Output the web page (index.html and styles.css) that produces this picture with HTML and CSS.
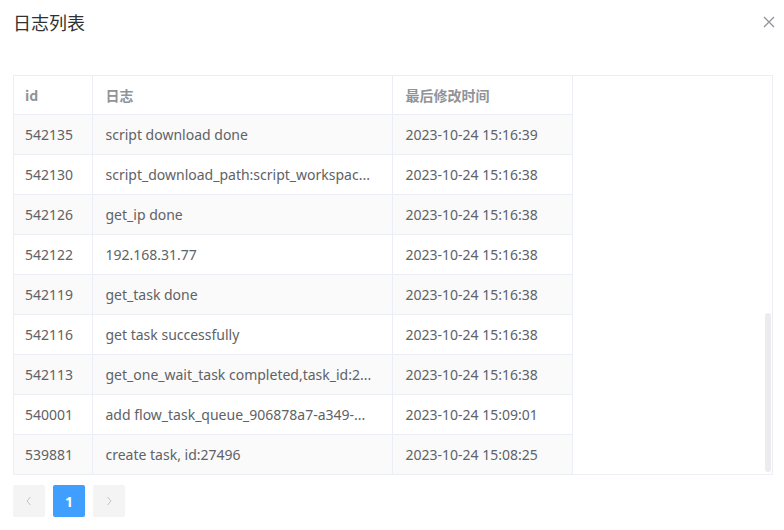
FILE: index.html
```html
<!DOCTYPE html>
<html lang="zh">
<head>
<meta charset="utf-8">
<link rel="stylesheet" href="styles.css">
</head>
<body>
<div class="dialog">
  <div class="dialog-header">
    <span class="dialog-title">日志列表</span>
    <button class="close-btn" aria-label="close">
      <svg width="12" height="12" viewBox="0 0 12 12"><path d="M1 1 L11 11 M11 1 L1 11" stroke="#909399" stroke-width="1.3" fill="none"/></svg>
    </button>
  </div>
  <div class="dialog-body">
    <div class="table-wrap">
      <table class="log-table">
        <colgroup>
          <col class="c-id"><col class="c-log"><col class="c-time"><col class="c-rest">
        </colgroup>
        <thead>
          <tr><th>id</th><th>日志</th><th>最后修改时间</th><th class="empty"></th></tr>
        </thead>
        <tbody>
          <tr class="striped"><td>542135</td><td>script download done</td><td>2023-10-24 15:16:39</td><td class="empty"></td></tr>
          <tr><td>542130</td><td>script_download_path:script_workspac...</td><td>2023-10-24 15:16:38</td><td class="empty"></td></tr>
          <tr class="striped"><td>542126</td><td>get_ip done</td><td>2023-10-24 15:16:38</td><td class="empty"></td></tr>
          <tr><td>542122</td><td>192.168.31.77</td><td>2023-10-24 15:16:38</td><td class="empty"></td></tr>
          <tr class="striped"><td>542119</td><td>get_task done</td><td>2023-10-24 15:16:38</td><td class="empty"></td></tr>
          <tr><td>542116</td><td>get task successfully</td><td>2023-10-24 15:16:38</td><td class="empty"></td></tr>
          <tr class="striped"><td>542113</td><td>get_one_wait_task completed,task_id:2...</td><td>2023-10-24 15:16:38</td><td class="empty"></td></tr>
          <tr><td>540001</td><td>add flow_task_queue_906878a7-a349-...</td><td>2023-10-24 15:09:01</td><td class="empty"></td></tr>
          <tr class="striped last"><td>539881</td><td>create task, id:27496</td><td>2023-10-24 15:08:25</td><td class="empty"></td></tr>
        </tbody>
      </table>
      <div class="scroll-thumb"></div>
    </div>
    <div class="pager">
      <button class="pg-btn disabled" aria-label="prev">
        <svg width="8" height="10" viewBox="0 0 8 10"><path d="M5.5 1 L2 5 L5.5 9" stroke="#c0c4cc" stroke-width="1" fill="none"/></svg>
      </button>
      <button class="pg-btn active">1</button>
      <button class="pg-btn disabled" aria-label="next">
        <svg width="8" height="10" viewBox="0 0 8 10"><path d="M2.5 1 L6 5 L2.5 9" stroke="#c0c4cc" stroke-width="1" fill="none"/></svg>
      </button>
    </div>
  </div>
</div>
</body>
</html>
```
FILE: styles.css
```css
* { box-sizing: border-box; }
html, body { margin: 0; padding: 0; background: #fff; }
body {
  font-family: "Noto Sans", "Noto Sans CJK SC", sans-serif;
  color: #606266;
  font-size: 14px;
}
.dialog { width: 784px; height: 530px; padding: 0 11px 0 13px; }
.dialog-header {
  height: 75px;
  display: flex;
  align-items: flex-start;
  justify-content: space-between;
  padding-top: 10px;
}
.dialog-title {
  font-family: "Noto Sans CJK SC", sans-serif;
  font-size: 18px;
  line-height: 24px;
  color: #303133;
}
.close-btn {
  border: 0;
  background: transparent;
  padding: 0;
  margin: 6px -2px 0 0;
  width: 12px;
  height: 12px;
  display: flex;
}
.table-wrap {
  position: relative;
  border: 1px solid #ebeef5;
  width: 760px;
}
.log-table {
  border-collapse: collapse;
  table-layout: fixed;
  width: 100%;
}
.c-id { width: 78px; }
.c-log { width: 300px; }
.c-time { width: 180px; }
.log-table th, .log-table td {
  height: 40px;
  padding: 0 12px 0 13px;
  text-align: left;
  border-right: 1px solid #ebeef5;
  border-bottom: 1px solid #ebeef5;
  white-space: nowrap;
  overflow: hidden;
  font-size: 14px;
}
.log-table th { height: 38px; }
.log-table th:first-child, .log-table td:first-child { padding-left: 11px; }
.log-table th.empty, .log-table td.empty { border-right: 0; border-bottom: 0; }
.log-table th {
  font-family: "Noto Sans CJK SC", sans-serif;
  color: #909399;
  font-weight: bold;
  background: #fff;
}
.log-table tr.striped td { background: #fafafa; }
.log-table tr.striped td.empty { background: #fff; }
.log-table tr.last td { border-bottom: 0; }
.scroll-thumb {
  position: absolute;
  right: 1px;
  top: 237px;
  width: 6px;
  height: 159px;
  border-radius: 3px;
  background: #ececec;
}
.pager {
  display: flex;
  gap: 8px;
  margin-top: 10px;
}
.pg-btn {
  width: 32px;
  height: 32px;
  border: 0;
  border-radius: 2px;
  background: #f4f4f5;
  display: flex;
  align-items: center;
  justify-content: center;
  padding: 0;
  font-family: inherit;
  font-size: 14px;
  font-weight: bold;
  color: #606266;
}
.pg-btn.active { background: #409eff; color: #fff; }
```
